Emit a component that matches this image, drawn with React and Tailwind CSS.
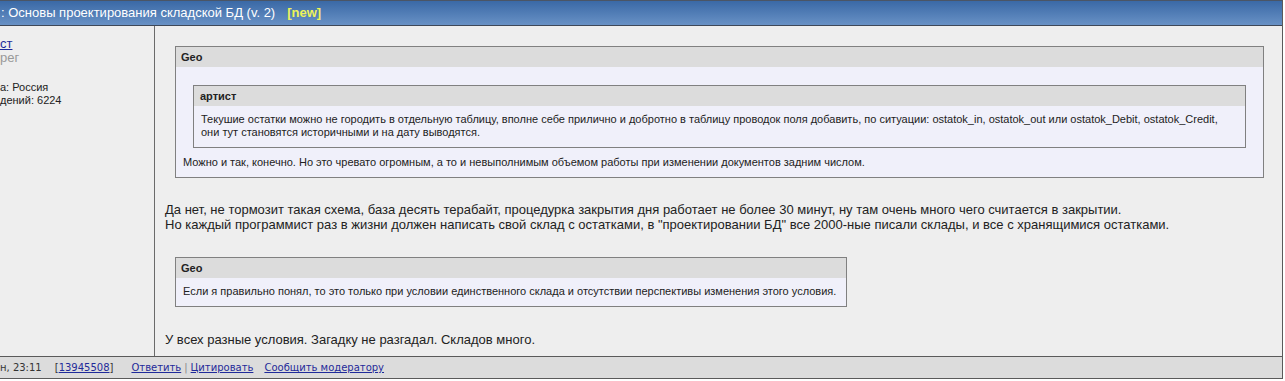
export default function App() {
  return (
    <div className="w-[1283px] bg-[#eeeeee] border-r border-[#5a5a5a] font-['Liberation_Sans',Arial,sans-serif] text-[#222]">
      <div className="h-[26px] border-t border-b border-t-[#4a5566] border-b-[#3e4858] bg-gradient-to-b from-[#3a69a6] to-[#6891c5] flex items-center text-white text-[13px] whitespace-nowrap overflow-hidden">
        <span className="pl-[1px]">: Основы проектирования складской БД (v. 2)</span>
        <span className="ml-[12px] font-bold text-[#eef35a]">[new]</span>
      </div>
      <div className="flex h-[330px]">
        <div className="w-[155px] shrink-0 border-r border-[#6a6a6a] pt-[11px] whitespace-nowrap">
          <div className="leading-[14px] text-[13px]">
            <span className="text-[#1f2a9a] underline">ст</span>
          </div>
          <div className="leading-[14px] text-[13px] text-[#999]">рег</div>
          <div className="h-[15px]"></div>
          <div className="leading-[14px] text-[11px] text-[#222]">а: Россия</div>
          <div className="leading-[13px] text-[11px] text-[#222]">дений: 6224</div>
        </div>
        <div className="flex-1 min-w-0 pt-[20px] pl-[10px]">
          <div className="ml-[10px] mr-[18px] border border-[#808080]">
            <div className="h-[20px] bg-[#dcdcdc] px-[5px] flex items-center text-[11px] font-bold text-[#222]">Geo</div>
            <div className="bg-[#f0f0fa] pt-[18px] pb-[8px]">
              <div className="mx-[17px] border border-[#808080]">
                <div className="h-[20px] bg-[#dcdcdc] px-[6px] flex items-center text-[11px] font-bold text-[#222]">артист</div>
                <div className="bg-[#f0f0fa] px-[7px] pt-[7px] pb-[8px] text-[11px] leading-[13px] text-[#222]">
                  Текушие остатки можно не городить в отдельную таблицу, вполне себе прилично и добротно в таблицу проводок поля добавить, по ситуации: ostatok_in, ostatok_out или ostatok_Debit, ostatok_Credit,
                  <br />
                  они тут становятся историчными и на дату выводятся.
                </div>
              </div>
              <div className="mt-[8px] px-[7px] text-[11px] leading-[13px] text-[#222]">
                Можно и так, конечно. Но это чревато огромным, а то и невыполнимым объемом работы при изменении документов задним числом.
              </div>
            </div>
          </div>
          <div className="mt-[24px] text-[13px] leading-[15px] text-[#222]">
            Да нет, не тормозит такая схема, база десять терабайт, процедурка закрытия дня работает не более 30 минут, ну там очень много чего считается в закрытии.
            <br />
            Но каждый программист раз в жизни должен написать свой склад с остатками, в "проектировании БД" все 2000-ные писали склады, и все с хранящимися остатками.
          </div>
          <div className="mt-[25px] ml-[10px] w-fit border border-[#808080]">
            <div className="h-[20px] bg-[#dcdcdc] px-[5px] flex items-center text-[11px] font-bold text-[#222]">Geo</div>
            <div className="bg-[#f0f0fa] pl-[7px] pr-[10px] pt-[7px] pb-[8px] text-[11px] leading-[13px] text-[#222] whitespace-nowrap">
              Если я правильно понял, то это только при условии единственного склада и отсутствии перспективы изменения этого условия.
            </div>
          </div>
          <div className="mt-[25px] text-[13px] leading-[15px] text-[#222]">
            У всех разные условия. Загадку не разгадал. Складов много.
          </div>
        </div>
      </div>
      <div className="h-[23px] border-t border-b border-[#5a5a5a] bg-[#dcdcdc] flex items-center whitespace-nowrap font-['DejaVu_Sans',Verdana,sans-serif] text-[10px] text-[#333]">
        <span>н, 23:11</span>
        <span className="ml-[13px]">
          [<span className="text-[#1f2a9a] underline">13945508</span>]
        </span>
        <span className="ml-[18px] text-[#1f2a9a] underline">Ответить</span>
        <span className="mx-[3px] text-[#888]">|</span>
        <span className="text-[#1f2a9a] underline">Цитировать</span>
        <span className="ml-[11px] text-[#1f2a9a] underline">Сообщить модератору</span>
      </div>
    </div>
  );
}
